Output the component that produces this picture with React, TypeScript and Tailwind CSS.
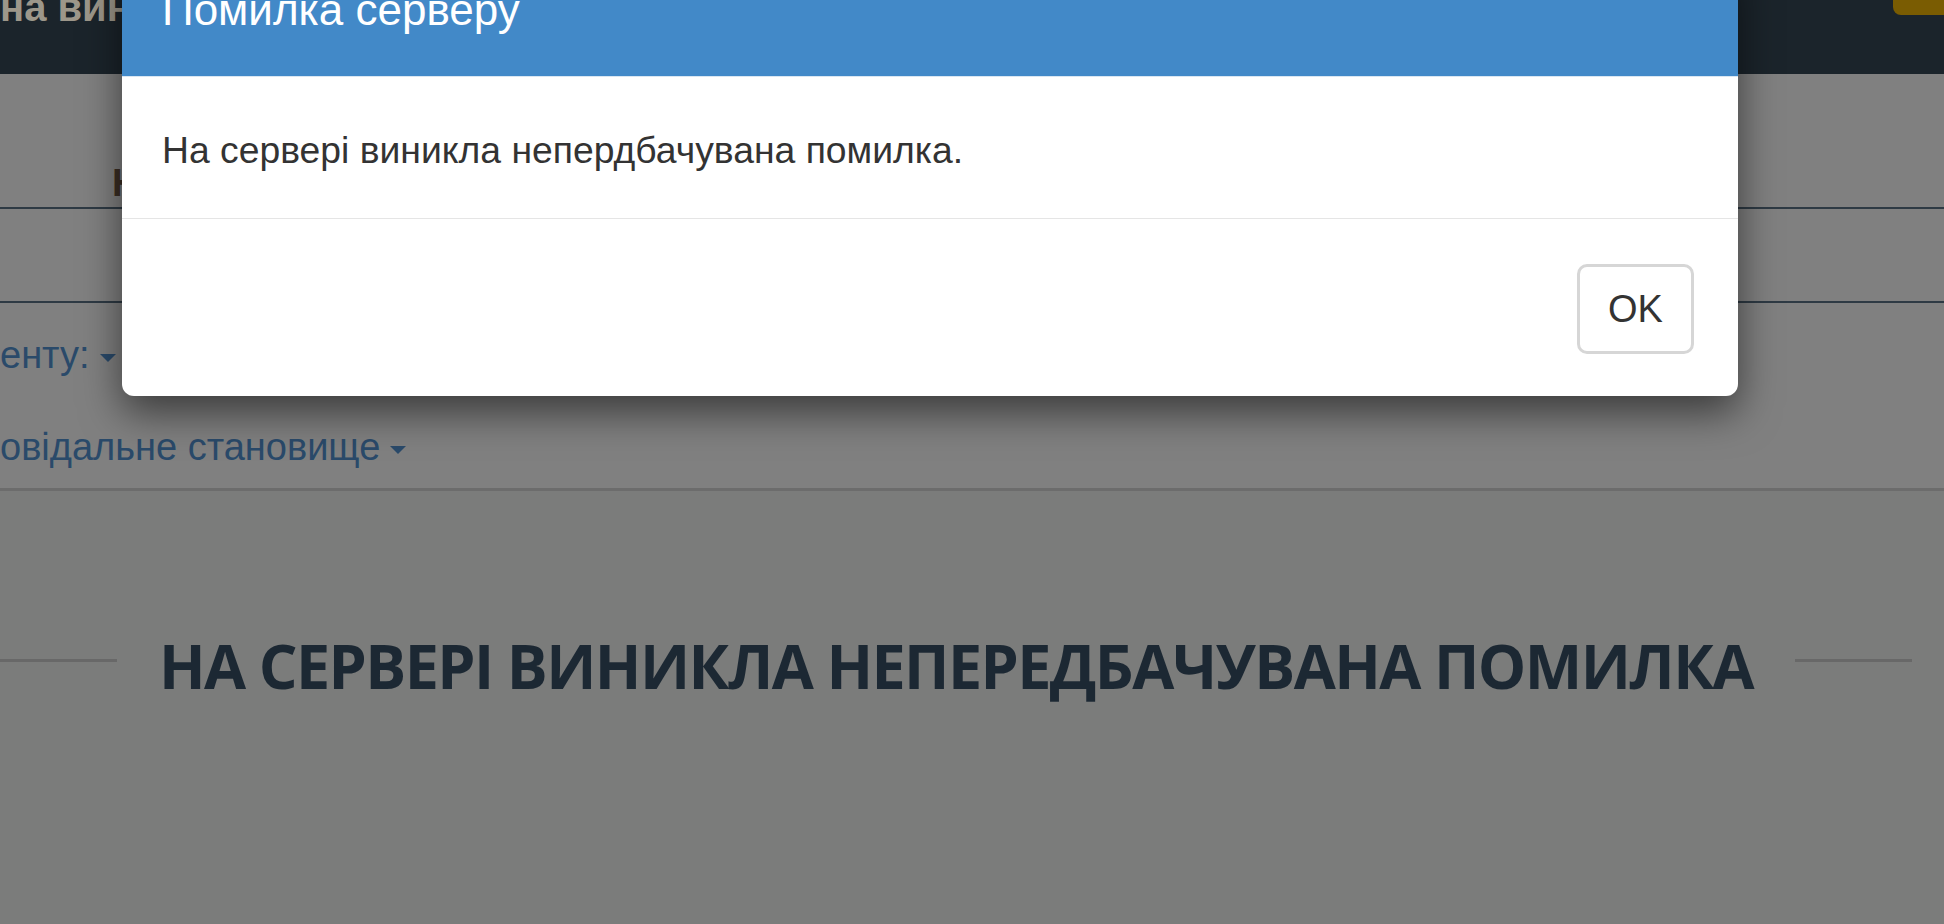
const Caret = () => (
  <span className="ml-[10px] inline-block h-0 w-0 border-x-[8px] border-t-[8px] border-x-transparent border-t-[#2a4a6a] align-middle" />
);

const App = () => {
  return (
    <div className="relative h-[924px] w-[1944px] overflow-hidden bg-[#7b7c7b] font-['Liberation_Sans',Arial,sans-serif]">
      {/* top bar, dimmed by the backdrop */}
      <header className="relative h-[74px] overflow-hidden bg-[#1b242b]">
        <div className="-mt-[13px] whitespace-nowrap text-[40px] font-bold leading-[40px] text-[#9d978a]">
          на виникла помилка
        </div>
        <div className="absolute right-0 top-0 h-[15px] w-[51px] rounded-bl-[8px] bg-[#7a5c02]" />
      </header>

      {/* form panel */}
      <section className="h-[417px] border-b-[3px] border-[#6c6c6c] bg-[#808080] text-[38px]">
        <div className="h-[135px] border-b-2 border-[#2e3a44] pl-[112px] pt-[81px]">
          <span className="font-bold leading-[38px] text-[#3b2e24]">Номер</span>
        </div>
        <div className="h-[94px] border-b-2 border-[#2e3a44]" />
        <div className="mt-[25px] whitespace-nowrap leading-[54px] text-[#2a4a6a]">
          енту:
          <Caret />
        </div>
        <div className="mt-[38px] whitespace-nowrap leading-[54px] text-[#2a4a6a]">
          овідальне становище
          <Caret />
        </div>
      </section>

      {/* page heading */}
      <div className="mt-[143px] flex items-start gap-[42px] pr-[32px]">
        <div className="mt-[25px] h-[3px] flex-1 bg-[#686868]" />
        <h1 className="whitespace-nowrap font-['Open_Sans',sans-serif] text-[61px] font-bold leading-[63px] tracking-[-1.6px] text-[#1c2833]">
          НА СЕРВЕРІ ВИНИКЛА НЕПЕРЕДБАЧУВАНА ПОМИЛКА
        </h1>
        <div className="mt-[25px] h-[3px] flex-1 bg-[#686868]" />
      </div>

      {/* error modal */}
      <div className="absolute left-[122px] top-[-40px] w-[1616px] rounded-b-[12px] bg-white shadow-[0_16px_40px_rgba(0,0,0,0.55)]">
        <div className="h-[117px] border-b border-[#d9e6f2] bg-[#4289c8] pl-[40px] pt-[26px]">
          <h4 className="text-[44px] leading-[48px] text-white">Помилка серверу</h4>
        </div>
        <div className="h-[141px] px-[40px] pt-[46px]">
          <p className="text-[37.3px] leading-[54px] text-[#333]">
            На сервері виникла непердбачувана помилка.
          </p>
        </div>
        <div className="flex justify-end border-t border-[#e5e5e5] pb-[42px] pr-[44px] pt-[45px]">
          <button
            type="button"
            className="flex h-[90px] w-[117px] items-center justify-center rounded-[10px] border-[3px] border-[#d6d6d6] bg-white text-[38px] text-[#333]"
          >
            OK
          </button>
        </div>
      </div>
    </div>
  );
};

export default App;
